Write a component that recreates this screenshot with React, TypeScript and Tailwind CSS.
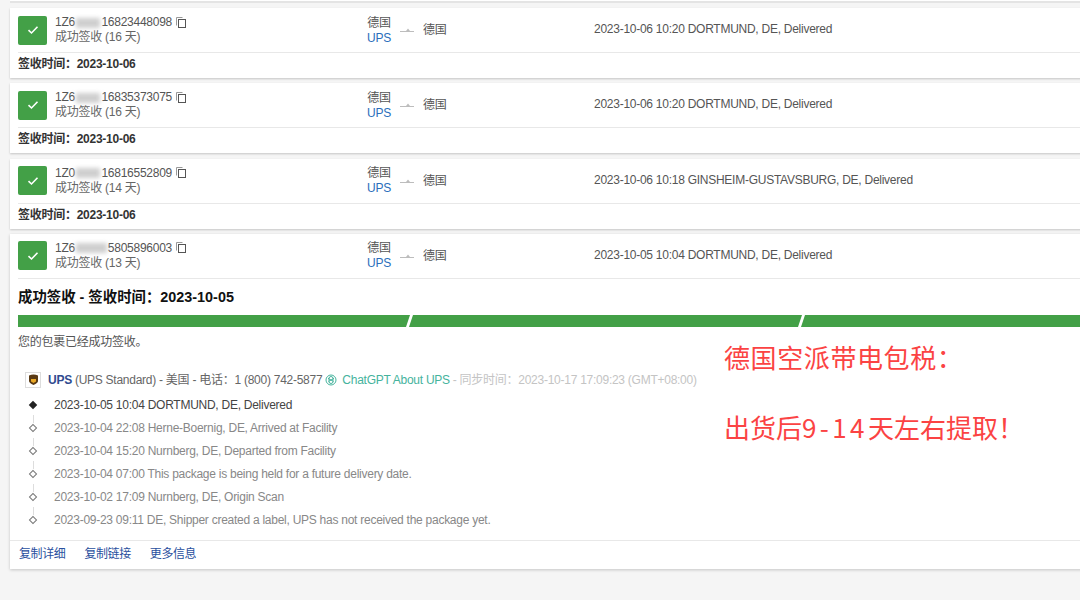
const FONT = "font-['Liberation_Sans','Noto_Sans_CJK_SC',sans-serif]";

interface ShipmentType {
    pre: string;
    post: string;
    days: number;
    event: string;
    signed?: string;
}

const shipments: ShipmentType[] = [
    { pre: '1Z6', post: '16823448098', days: 16, event: '2023-10-06 10:20 DORTMUND, DE, Delivered', signed: '2023-10-06' },
    { pre: '1Z6', post: '16835373075', days: 16, event: '2023-10-06 10:20 DORTMUND, DE, Delivered', signed: '2023-10-06' },
    { pre: '1Z0', post: '16816552809', days: 14, event: '2023-10-06 10:18 GINSHEIM-GUSTAVSBURG, DE, Delivered', signed: '2023-10-06' },
    { pre: '1Z6', post: '5805896003', days: 13, event: '2023-10-05 10:04 DORTMUND, DE, Delivered' }
];

const events = [
    '2023-10-05 10:04 DORTMUND, DE, Delivered',
    '2023-10-04 22:08 Herne-Boernig, DE, Arrived at Facility',
    '2023-10-04 15:20 Nurnberg, DE, Departed from Facility',
    '2023-10-04 07:00 This package is being held for a future delivery date.',
    '2023-10-02 17:09 Nurnberg, DE, Origin Scan',
    '2023-09-23 09:11 DE, Shipper created a label, UPS has not received the package yet.'
];

const ShipmentRow = ({ item }: { item: ShipmentType }) => (
    <div className="flex h-[44px] items-center pl-[8px]">
        <div className="flex h-[29px] w-[29px] shrink-0 items-center justify-center rounded-[2px] bg-[#43a047]">
            <svg width="12" height="10" viewBox="0 0 12 10" fill="none">
                <path d="M1.5 5.2 4.5 8 10.5 1.8" stroke="#fff" strokeWidth="1.6" />
            </svg>
        </div>
        <div className="ml-[8px] w-[312px] shrink-0 pb-[1px] leading-[15px]">
            <div className="flex items-center text-[#555]">
                <div className="flex w-[117px] items-center">
                    <span>{item.pre}</span>
                    <span className="mx-[1px] h-[10px] flex-1 bg-[#cfcfcf] blur-[2px]" />
                    <span>{item.post}</span>
                </div>
                <svg width="10" height="11" viewBox="0 0 10 11" fill="none" className="mb-[1px] ml-[4px] shrink-0">
                    <path d="M.5 8.5V.5h6" stroke="#999" />
                    <rect x="2.5" y="2.5" width="7" height="8" stroke="#555" />
                </svg>
            </div>
            <div className="h-[14px] text-[#666]">成功签收 ({item.days} 天)</div>
        </div>
        <div className="w-[24px] shrink-0 pt-[1px] text-center leading-[15px]">
            <div className="text-[#555]">德国</div>
            <div className="text-[#2a6ebb]">UPS</div>
        </div>
        <svg width="14" height="6" viewBox="0 0 14 6" className="ml-[9px] shrink-0">
            <path d="M0 4h14v1H0zM6 4l2-2.5L10 4z" fill="#bdbdbd" />
        </svg>
        <div className="ml-[9px] w-[171px] shrink-0 text-[#555]">德国</div>
        <div className="pb-[2px] text-[#555]">{item.event}</div>
    </div>
);

const App = () => {
    return (
        <div className={`relative h-[600px] w-[1080px] overflow-hidden bg-[#f5f5f5] pl-[10px] text-[12px] tracking-[-0.26px] ${FONT}`}>
            <div className="h-[3px] border-b-2 border-[#e4e4e4] bg-white" />
            <div className="mt-[5px] flex w-[1100px] flex-col gap-[5.33px]">
                {shipments.slice(0, 3).map((item) => (
                    <div key={item.post} className="h-[70px] bg-white shadow-[0_1px_2px_rgba(0,0,0,0.2)]">
                        <ShipmentRow item={item} />
                        <div className="ml-[8px] flex h-[25px] items-center border-t border-[#e8e8e8] pb-[2px] font-bold text-[#333]">
                            签收时间：{item.signed}
                        </div>
                    </div>
                ))}
                <div className="h-[335px] bg-white shadow-[0_1px_3px_rgba(0,0,0,0.2)]">
                    <ShipmentRow item={shipments[3]} />
                    <div className="ml-[8px] border-t border-[#e8e8e8]">
                        <div className="mt-[10px] text-[14.4px] leading-[17px] font-bold tracking-normal text-[#111]">
                            成功签收 - 签收时间：2023-10-05
                        </div>
                        <div className="mt-[9px] flex h-[12px] gap-[3px]">
                            <div className="w-[392px] bg-[#43a047] [clip-path:polygon(0_0,100%_0,calc(100%-4px)_100%,0_100%)]" />
                            <div className="-ml-[4px] w-[393px] bg-[#43a047] [clip-path:polygon(4px_0,100%_0,calc(100%-4px)_100%,0_100%)]" />
                            <div className="-ml-[4px] w-[300px] bg-[#43a047] [clip-path:polygon(4px_0,100%_0,100%_100%,0_100%)]" />
                        </div>
                        <div className="mt-[8px] leading-[15px] text-[#555]">您的包裹已经成功签收。</div>
                        <div className="mt-[21px] ml-[7px] flex items-center">
                            <div className="flex h-[16px] w-[16px] items-center justify-center border border-[#ddd]">
                                <svg width="9" height="11" viewBox="0 0 9 11">
                                    <path d="M0 1.5Q4.5-.5 9 1.5V7Q9 9 4.5 11 0 9 0 7z" fill="#5a3a14" />
                                    <path d="M2 5h5v2.5L4.5 9 2 7.5z" fill="#e9a825" />
                                </svg>
                            </div>
                            <span className="ml-[7px] font-bold text-[#2f4a8f]">UPS</span>
                            <span className="ml-[3px] text-[#666]">(UPS Standard) - 美国 - 电话：1 (800) 742-5877</span>
                            <svg width="12" height="12" viewBox="0 0 24 24" fill="none" className="ml-[3px]" stroke="#45b39d" strokeWidth="2">
                                <circle cx="12" cy="12" r="10" />
                                <path d="M12 5a4 4 0 0 1 4 4v6a4 4 0 0 1-8 0V9a4 4 0 0 1 4-4zM6 8.5l11 6.5M18 8.5 7 15" />
                            </svg>
                            <span className="ml-[5px] text-[#45b39d]">ChatGPT About UPS</span>
                            <span className="ml-[3px] text-[#c4c4c4]">- 同步时间：2023-10-17 17:09:23 (GMT+08:00)</span>
                        </div>
                        <div className="mt-[5px] ml-[11px] flex flex-col">
                            {events.map((text, i) => (
                                <div key={text} className="flex h-[23px] items-center">
                                    <div className="relative flex w-[25px] shrink-0 justify-start pl-[1px]">
                                        <span
                                            className={
                                                i === 0
                                                    ? 'h-[6px] w-[6px] rotate-45 bg-[#222]'
                                                    : 'h-[6px] w-[6px] rotate-45 border-[1.5px] border-[#777] bg-white'
                                            }
                                        />
                                        {i < events.length - 1 && (
                                            <span className="absolute top-[13px] left-[3.5px] h-[8px] w-px bg-[#ddd]" />
                                        )}
                                    </div>
                                    <span className={i === 0 ? 'text-[#444]' : 'text-[#888]'}>{text}</span>
                                </div>
                            ))}
                        </div>
                    </div>
                    <div className="mt-[8px] flex h-[29px] items-center gap-[19px] border-t border-[#e8e8e8] pb-[1px] pl-[9px] tracking-[-0.4px] text-[#2a4f9e]">
                        <span>复制详细</span>
                        <span>复制链接</span>
                        <span>更多信息</span>
                    </div>
                </div>
            </div>
            <div className="absolute top-[339px] left-[724px] font-['Noto_Sans_CJK_SC',sans-serif] text-[26px] leading-[36px] tracking-normal text-[#fb4343]">
                <p className="tracking-[0.6px]">德国空派带电包税：</p>
                <p className="mt-[34px]">
                    出货后<span className="tracking-[3.4px]">9-14</span>天左右提取！
                </p>
            </div>
        </div>
    );
};

export default App;
